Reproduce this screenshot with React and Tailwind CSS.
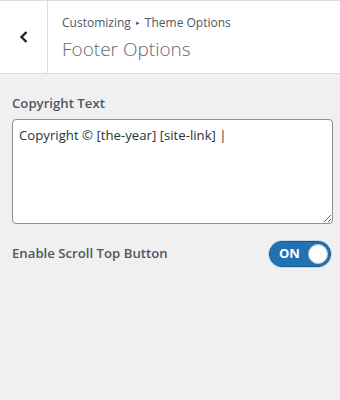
import React, { useState } from "react";

function App() {
  const [text, setText] = useState("Copyright © [the-year] [site-link] |");
  const [on, setOn] = useState(true);

  return (
    <div
      className="w-[340px] h-[400px] bg-[#f0f0f1] text-[#50575e]"
      style={{ fontFamily: '"Open Sans", "Noto Sans", sans-serif' }}
    >
      {/* Header */}
      <div className="flex h-[74px] bg-white border-t border-b border-[#dcdcde]">
        <button className="w-[48px] flex items-center justify-center border-r border-[#dcdcde] text-[#1d2327]">
          <svg width="12" height="14" viewBox="0 0 12 14" fill="none">
            <path d="M8.5 2 L3.5 7 L8.5 12" stroke="currentColor" strokeWidth="2.4" />
          </svg>
        </button>
        <div className="flex flex-col pl-[14px] pt-[13px]">
          <span className="text-[12px] leading-[18px] text-[#50575e]">
            Customizing
            <span className="text-[7px] align-[2px] mx-[5px]">▸</span>
            Theme Options
          </span>
          <span className="text-[19px] leading-[28px] font-light text-[#646970] mt-[3px]">
            Footer Options
          </span>
        </div>
      </div>

      {/* Controls */}
      <div className="pl-3 pr-[7px] pt-[19px]">
        <label className="block text-[13.2px] font-semibold leading-5 mb-[6px]">
          Copyright Text
        </label>
        <textarea
          value={text}
          onChange={(e) => setText(e.target.value)}
          className="block w-full h-[105px] bg-white border border-[#8c8f94] rounded-[4px] px-[6px] py-[5px] text-[13.2px] leading-5 text-[#2c3338] outline-none"
        />

        <div className="flex items-center justify-between mt-[17px]">
          <span className="text-[13.2px] font-semibold">Enable Scroll Top Button</span>
          <button
            onClick={() => setOn(!on)}
            className="mr-[2px] w-[62px] h-[26px] rounded-full bg-[#2271b1] border border-[#135e96] ring-1 ring-[#c5d9ea] flex items-center justify-between pl-[9px] pr-[2px]"
          >
            <span className="text-white text-[13px] font-bold">{on ? "ON" : "OFF"}</span>
            <span className="w-[20px] h-[20px] rounded-full bg-white border border-[#c3c4c7]" />
          </button>
        </div>
      </div>
    </div>
  );
}

export default App;
